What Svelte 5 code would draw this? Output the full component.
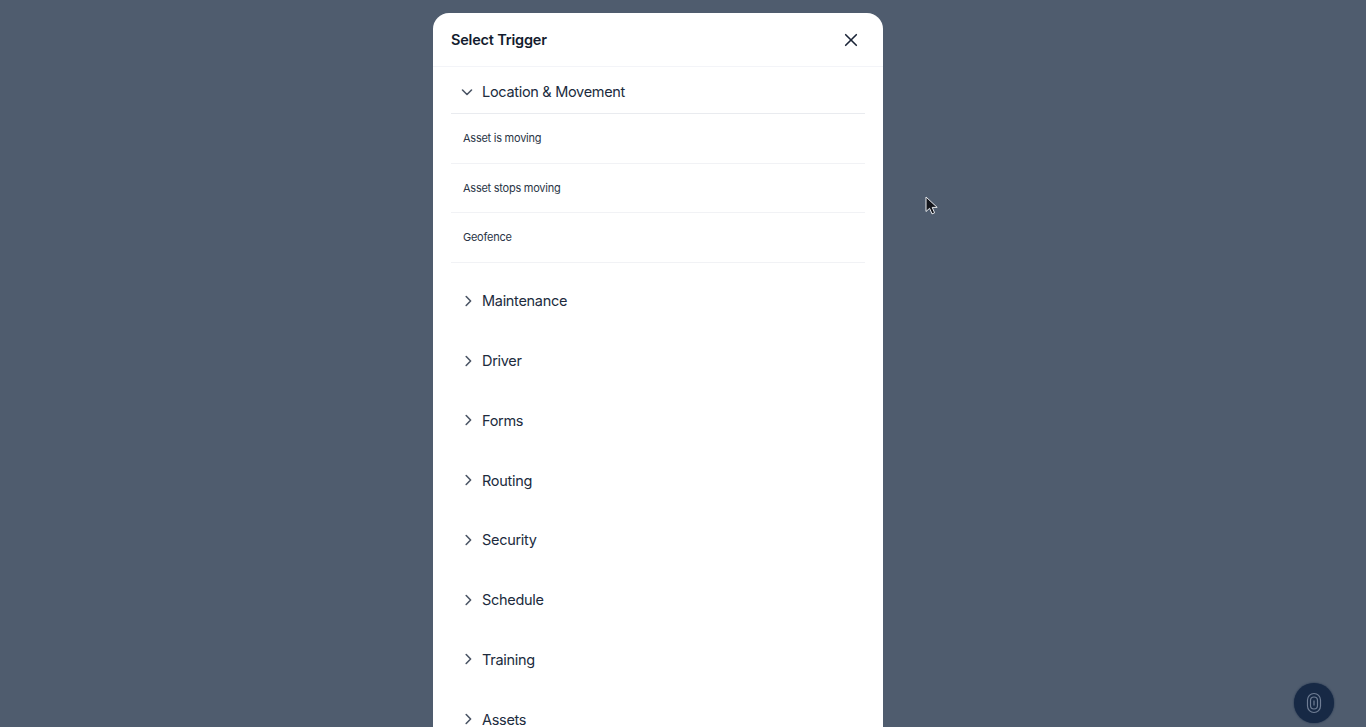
<script>
  const triggers = ['Asset is moving', 'Asset stops moving', 'Geofence'];
  const groups = ['Maintenance', 'Driver', 'Forms', 'Routing', 'Security', 'Schedule', 'Training', 'Assets'];
</script>

<div class="page">
  <section class="modal">
    <header>
      <h2>Select Trigger</h2>
      <button class="close" aria-label="Close">
        <svg width="16" height="16" viewBox="0 0 16 16" fill="none" stroke="#1a2437" stroke-width="1.6" stroke-linecap="round">
          <path d="M2.700 2.700l10.600 10.600M13.300 2.700L2.700 13.300" />
        </svg>
      </button>
    </header>

    <div class="body">
      <div class="group open">
        <svg class="chev down" width="14" height="14" viewBox="0 0 14 14" fill="none" stroke="#4b5565" stroke-width="1.600" stroke-linecap="round" stroke-linejoin="round">
          <path d="M2.500 5l4.500 4.500L11.500 5" />
        </svg>
        <span>Location &amp; Movement</span>
      </div>
      <ul>
        {#each triggers as t}
          <li>{t}</li>
        {/each}
      </ul>
      {#each groups as g}
        <div class="group">
          <svg class="chev" width="14" height="14" viewBox="0 0 14 14" fill="none" stroke="#4b5565" stroke-width="1.600" stroke-linecap="round" stroke-linejoin="round">
            <path d="M5.200 2.500L9.600 7l-4.400 4.500" />
          </svg>
          <span>{g}</span>
        </div>
      {/each}
    </div>
  </section>

  <svg class="cursor" width="14" height="20" viewBox="0 0 14 20">
    <path d="M1 1v14.500l3.600-3.200 2.400 5.600 2.600-1.100-2.400-5.400h5z" fill="#14161c" stroke="#e8eaee" stroke-width="1" />
  </svg>

  <button class="fab" aria-label="Fingerprint">
    <svg width="16" height="22" viewBox="0 0 16 22" fill="none" stroke="#6f7d94" stroke-width="1.200">
      <rect x="1.500" y="1.500" width="13" height="19" rx="6.500" />
      <rect x="4.500" y="5" width="7" height="12" rx="3.500" />
      <path d="M8 8.500v5" />
    </svg>
  </button>
</div>

<style>
  :global(body) {
    margin: 0;
    overflow: hidden;
  }

  .page {
    height: 727px;
    box-sizing: border-box;
    padding: 13px 50px 0 0;
    overflow: hidden;
    display: flex;
    justify-content: center;
    background: #4f5c6e;
    font-family: Inter, 'Liberation Sans', sans-serif;
    color: #1a2437;
    position: relative;
  }

  .modal {
    width: 450px;
    flex: none;
    height: 760px;
    background: #fff;
    border-radius: 16px 16px 0 0;
  }

  header {
    height: 54px;
    box-sizing: border-box;
    padding: 0 24px 0 18px;
    display: flex;
    align-items: center;
    justify-content: space-between;
    border-bottom: 1px solid #f3f4f8;
  }

  h2 {
    margin: 0;
    font-size: 14.500px;
    letter-spacing: -0.2px;
    font-weight: 600;
    color: #131c2e;
  }

  .close {
    padding: 0;
    border: none;
    background: none;
    display: flex;
  }

  .body {
    padding: 0 18px;
  }

  .group {
    height: 59.75px;
    display: flex;
    align-items: center;
    gap: 9px;
    padding-left: 8px;
    font-size: 14.500px;
    letter-spacing: -0.3px;
    color: #202b3d;
  }

  .group.open {
    height: 47px;
    box-sizing: border-box;
    padding-top: 2px;
    border-bottom: 1px solid #e9ebef;
  }

  .chev {
    flex: none;
    transform: translateX(2px);
  }

  .chev.down {
    transform: translate(1px, 1px);
  }

  ul {
    list-style: none;
    margin: 0 0 8.600px;
    padding: 0;
  }

  li {
    height: 49.500px;
    box-sizing: border-box;
    display: flex;
    align-items: center;
    padding-left: 12px;
    font-size: 11px;
    letter-spacing: -0.25px;
    color: #2a3546;
    border-bottom: 1px solid #f1f2f5;
  }

  .cursor {
    position: absolute;
    left: 925px;
    top: 196px;
  }

  .fab {
    position: absolute;
    left: 1294px;
    top: 682.500px;
    width: 40px;
    height: 40px;
    padding: 0;
    border: none;
    border-radius: 50%;
    background: #172945;
    box-shadow: 0 0 2px #172945;
    display: flex;
    align-items: center;
    justify-content: center;
  }
</style>
